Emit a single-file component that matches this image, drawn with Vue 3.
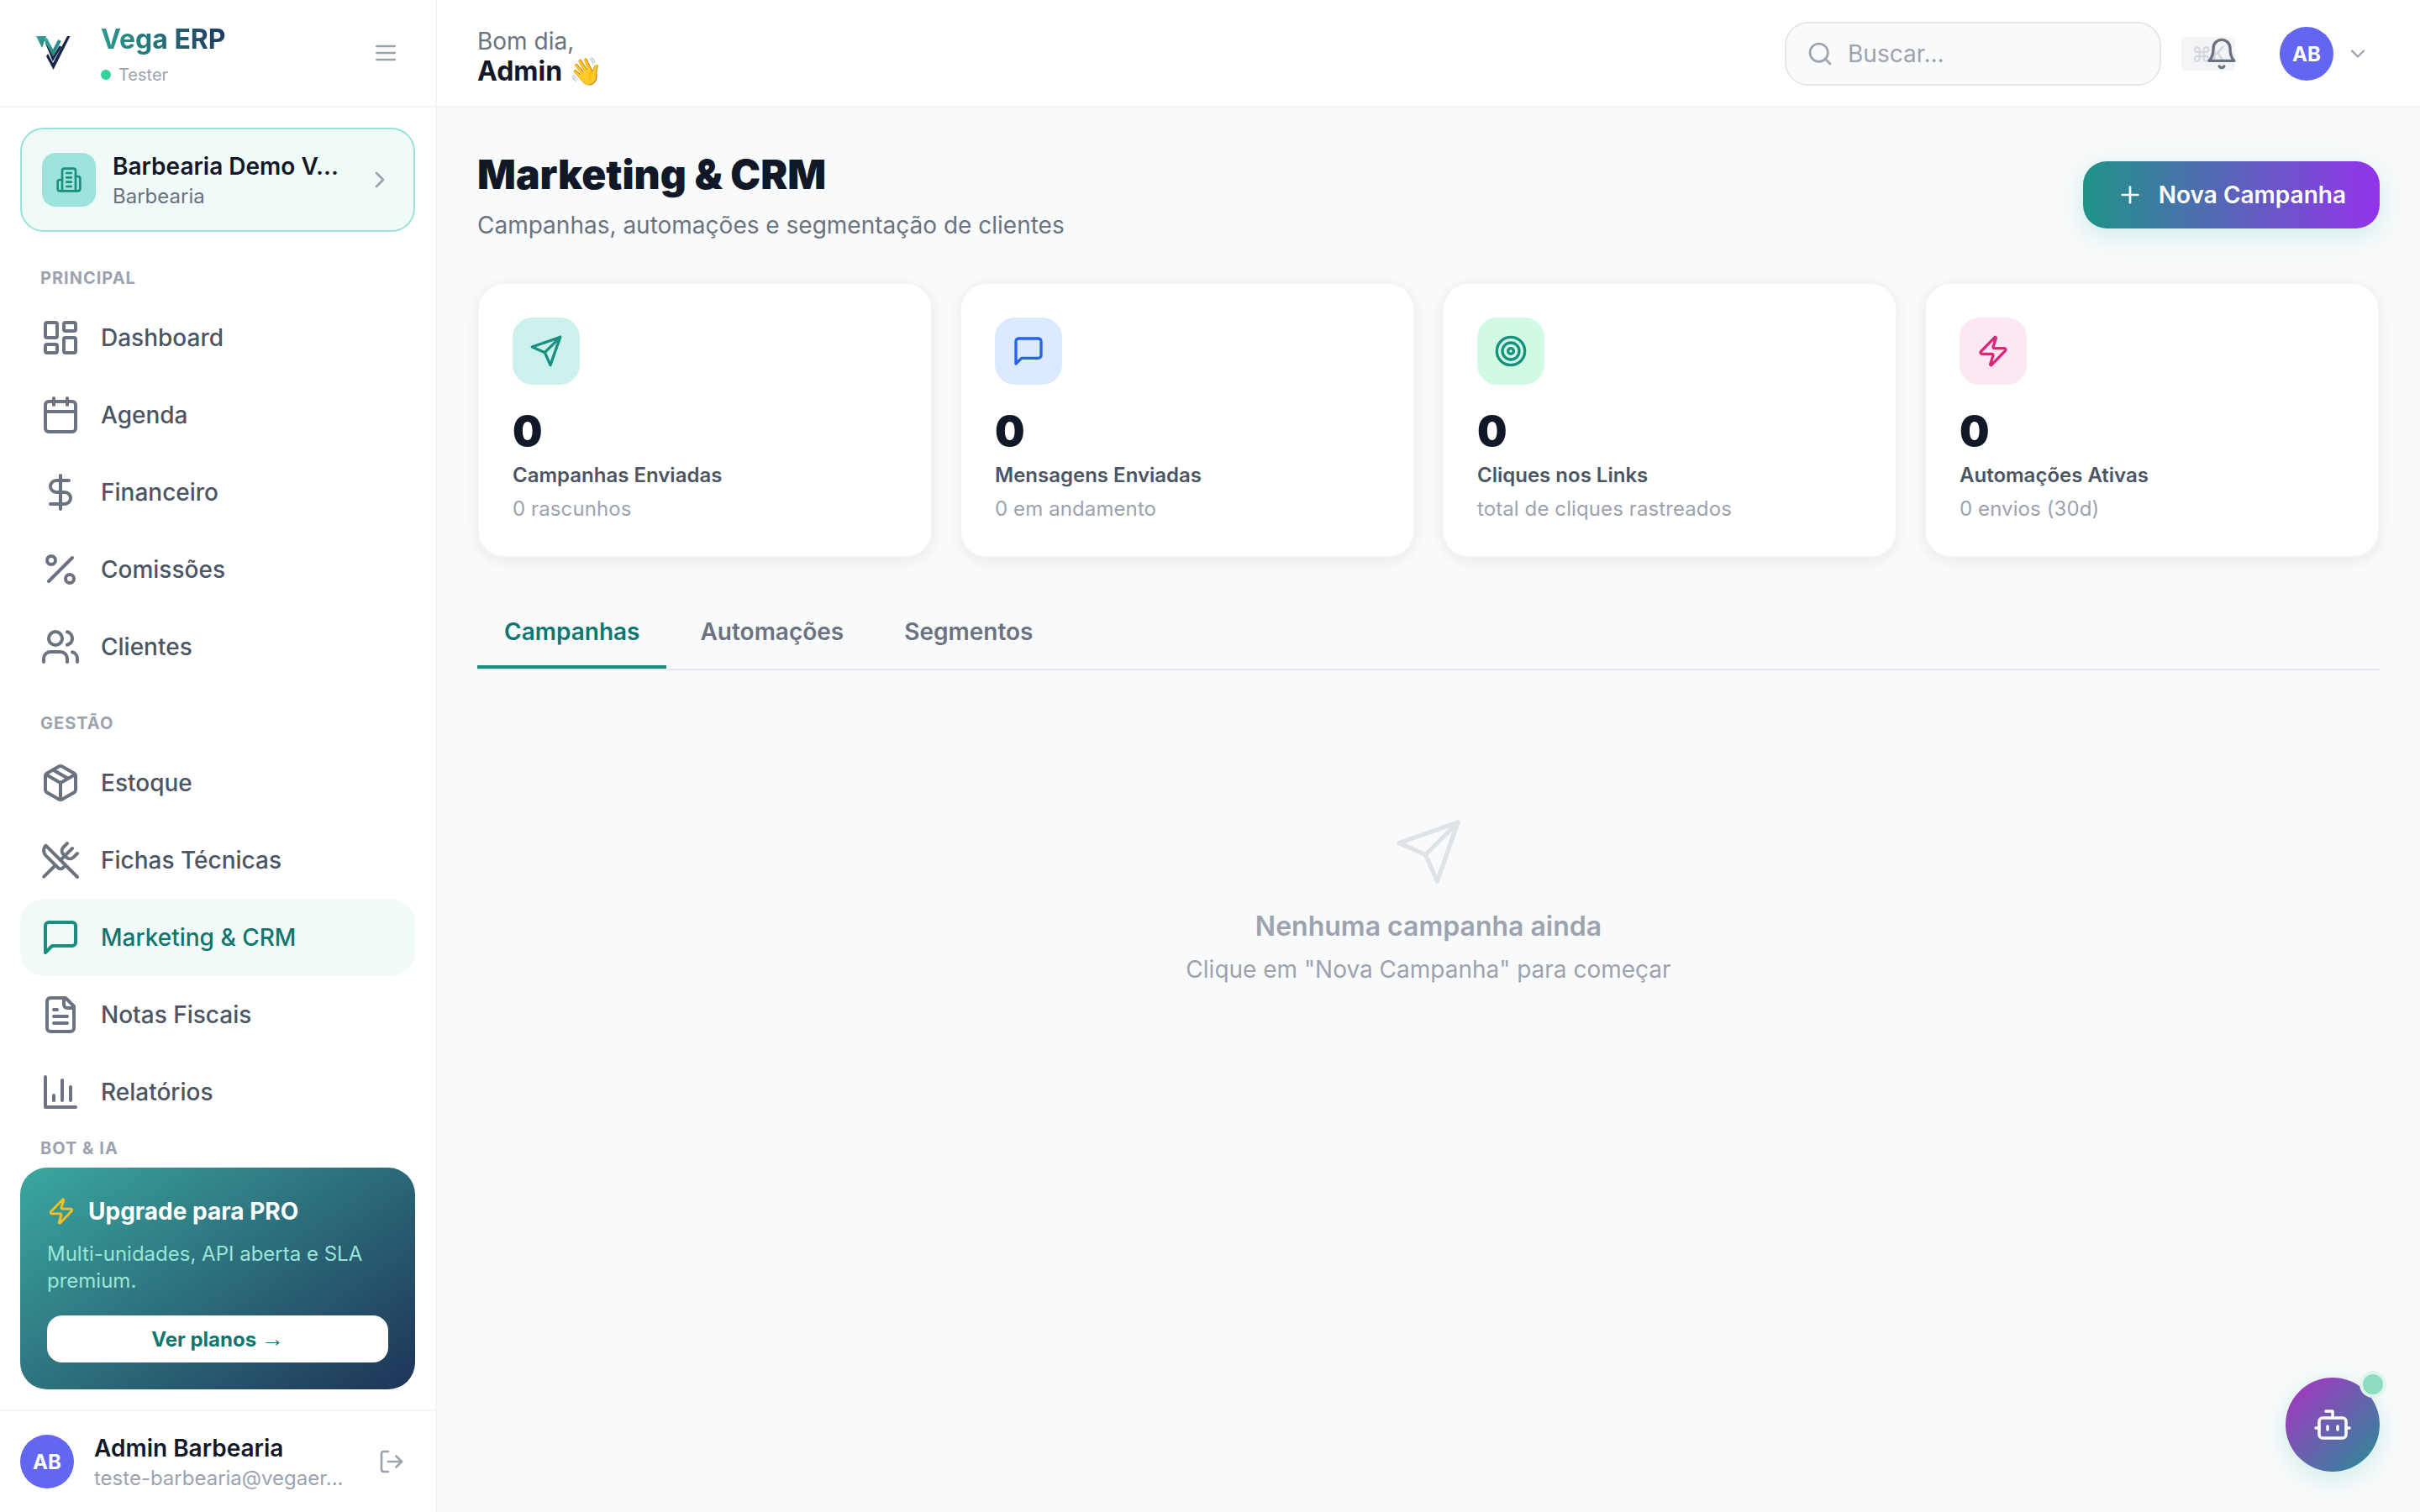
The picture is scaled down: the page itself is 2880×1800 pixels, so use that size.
<script setup>
import { ref } from 'vue'

const principal = [
  { label: 'Dashboard', icon: 'dashboard' },
  { label: 'Agenda', icon: 'calendar' },
  { label: 'Financeiro', icon: 'dollar' },
  { label: 'Comissões', icon: 'percent' },
  { label: 'Clientes', icon: 'users' },
]
const gestao = [
  { label: 'Estoque', icon: 'package' },
  { label: 'Fichas Técnicas', icon: 'utensils' },
  { label: 'Marketing & CRM', icon: 'message', active: true },
  { label: 'Notas Fiscais', icon: 'file' },
  { label: 'Relatórios', icon: 'chart' },
]
const stats = [
  { icon: 'send', tone: 'teal', label: 'Campanhas Enviadas', sub: '0 rascunhos' },
  { icon: 'message', tone: 'blue', label: 'Mensagens Enviadas', sub: '0 em andamento' },
  { icon: 'target', tone: 'green', label: 'Cliques nos Links', sub: 'total de cliques rastreados' },
  { icon: 'zap', tone: 'pink', label: 'Automações Ativas', sub: '0 envios (30d)' },
]
const tabs = ['Campanhas', 'Automações', 'Segmentos']
const activeTab = ref('Campanhas')

// lucide shapes, written as svg child markup
const icons = {
  dashboard: '<rect width="7" height="9" x="3" y="3" rx="1"/><rect width="7" height="5" x="14" y="3" rx="1"/><rect width="7" height="9" x="14" y="12" rx="1"/><rect width="7" height="5" x="3" y="16" rx="1"/>',
  calendar: '<path d="M8 2v4"/><path d="M16 2v4"/><rect width="18" height="18" x="3" y="4" rx="2"/><path d="M3 10h18"/>',
  dollar: '<line x1="12" x2="12" y1="2" y2="22"/><path d="M17 5H9.5a3.5 3.5 0 0 0 0 7h5a3.5 3.5 0 0 1 0 7H6"/>',
  percent: '<line x1="19" x2="5" y1="5" y2="19"/><circle cx="6.5" cy="6.5" r="2.5"/><circle cx="17.5" cy="17.5" r="2.5"/>',
  users: '<path d="M16 21v-2a4 4 0 0 0-4-4H6a4 4 0 0 0-4 4v2"/><circle cx="9" cy="7" r="4"/><path d="M22 21v-2a4 4 0 0 0-3-3.87"/><path d="M16 3.13a4 4 0 0 1 0 7.75"/>',
  package: '<path d="m7.5 4.27 9 5.15"/><path d="M21 8a2 2 0 0 0-1-1.73l-7-4a2 2 0 0 0-2 0l-7 4A2 2 0 0 0 3 8v8a2 2 0 0 0 1 1.73l7 4a2 2 0 0 0 2 0l7-4A2 2 0 0 0 21 16Z"/><path d="m3.3 7 8.7 5 8.7-5"/><path d="M12 22V12"/>',
  utensils: '<path d="m16 2-2.3 2.3a3 3 0 0 0 0 4.2l1.8 1.8a3 3 0 0 0 4.2 0L22 8"/><path d="M15 15 3.3 3.3a4.2 4.2 0 0 0 0 6l7.3 7.3c.7.7 2 .7 2.8 0L15 15Zm0 0 7 7"/><path d="m2.1 21.8 6.4-6.3"/><path d="m19 5-7 7"/>',
  message: '<path d="M21 15a2 2 0 0 1-2 2H7l-4 4V5a2 2 0 0 1 2-2h14a2 2 0 0 1 2 2z"/>',
  file: '<path d="M15 2H6a2 2 0 0 0-2 2v16a2 2 0 0 0 2 2h12a2 2 0 0 0 2-2V7Z"/><path d="M14 2v4a2 2 0 0 0 2 2h4"/><path d="M10 9H8"/><path d="M16 13H8"/><path d="M16 17H8"/>',
  chart: '<path d="M3 3v18h18"/><path d="M18 17V9"/><path d="M13 17V5"/><path d="M8 17v-3"/>',
  send: '<path d="m22 2-7 20-4-9-9-4Z"/><path d="M22 2 11 13"/>',
  target: '<circle cx="12" cy="12" r="10"/><circle cx="12" cy="12" r="6"/><circle cx="12" cy="12" r="2"/>',
  zap: '<path d="M4 14a1 1 0 0 1-.78-1.63l9.9-10.2a.5.5 0 0 1 .86.46l-1.92 6.02A1 1 0 0 0 13 10h7a1 1 0 0 1 .78 1.63l-9.9 10.2a.5.5 0 0 1-.86-.46l1.92-6.02A1 1 0 0 0 11 14z"/>',
  building: '<path d="M6 22V4a2 2 0 0 1 2-2h8a2 2 0 0 1 2 2v18Z"/><path d="M6 12H4a2 2 0 0 0-2 2v6a2 2 0 0 0 2 2h2"/><path d="M18 9h2a2 2 0 0 1 2 2v9a2 2 0 0 1-2 2h-2"/><path d="M10 6h4"/><path d="M10 10h4"/><path d="M10 14h4"/><path d="M10 18h4"/>',
  menu: '<line x1="4" x2="20" y1="12" y2="12"/><line x1="4" x2="20" y1="6" y2="6"/><line x1="4" x2="20" y1="18" y2="18"/>',
  right: '<path d="m9 18 6-6-6-6"/>',
  down: '<path d="m6 9 6 6 6-6"/>',
  plus: '<path d="M5 12h14"/><path d="M12 5v14"/>',
  search: '<circle cx="11" cy="11" r="8"/><path d="m21 21-4.3-4.3"/>',
  bell: '<path d="M6 8a6 6 0 0 1 12 0c0 7 3 9 3 9H3s3-2 3-9"/><path d="M10.3 21a1.94 1.94 0 0 0 3.4 0"/>',
  logout: '<path d="M9 21H5a2 2 0 0 1-2-2V5a2 2 0 0 1 2-2h4"/><polyline points="16 17 21 12 16 7"/><line x1="21" x2="9" y1="12" y2="12"/>',
  bot: '<path d="M12 8V4H8"/><rect width="16" height="12" x="4" y="8" rx="2"/><path d="M2 14h2"/><path d="M20 14h2"/><path d="M15 13v2"/><path d="M9 13v2"/>',
}
</script>

<template>
  <div class="app">
    <aside class="sidebar">
      <div class="brand">
        <svg class="logo" viewBox="0 0 42 42">
          <defs>
            <linearGradient id="logoTeal" x1="0" y1="0" x2="1" y2="1">
              <stop offset="0" stop-color="#3aa89f" />
              <stop offset="1" stop-color="#1f7f7a" />
            </linearGradient>
          </defs>
          <path d="M40.500 1H37L20 33l-6-11-2 3 8.500 16z" fill="#16264a" />
          <path d="M12 8l8 20 9-15" fill="none" stroke="#16264a" stroke-width="3" />
          <path d="M0 1h12L7 15z" fill="url(#logoTeal)" />
          <path d="M11 4l9 17 8-15" fill="none" stroke="url(#logoTeal)" stroke-width="4" />
        </svg>
        <div class="brandText">
          <div class="brandName">Vega ERP</div>
          <div class="brandPlan"><span class="dot"></span>Tester</div>
        </div>
        <svg class="ico menuIco" viewBox="0 0 24 24" v-html="icons.menu"></svg>
      </div>

      <div class="unit">
        <div class="unitIcon">
          <svg class="ico buildIco" viewBox="0 0 24 24" v-html="icons.building"></svg>
        </div>
        <div class="unitText">
          <div class="unitName">Barbearia Demo V...</div>
          <div class="unitType">Barbearia</div>
        </div>
        <svg class="ico unitChevron" viewBox="0 0 24 24" v-html="icons.right"></svg>
      </div>

      <nav class="nav">
        <div class="navLabel">PRINCIPAL</div>
        <div class="navList">
          <a v-for="item in principal" :key="item.label" class="navItem">
            <svg class="ico navIco" viewBox="0 0 24 24" v-html="icons[item.icon]"></svg>
            {{ item.label }}
          </a>
        </div>
        <div class="navLabel">GESTÃO</div>
        <div class="navList">
          <a
            v-for="item in gestao"
            :key="item.label"
            class="navItem"
            :class="{ active: item.active }"
          >
            <svg class="ico navIco" viewBox="0 0 24 24" v-html="icons[item.icon]"></svg>
            {{ item.label }}
          </a>
        </div>
        <div class="navLabel tight">BOT &amp; IA</div>
      </nav>

      <div class="promo">
        <div class="promoTitle">
          <svg class="ico promoZap" viewBox="0 0 24 24" v-html="icons.zap"></svg>
          Upgrade para PRO
        </div>
        <p class="promoText">Multi-unidades, API aberta e SLA premium.</p>
        <button type="button" class="promoBtn">Ver planos <span class="arrow">→</span></button>
      </div>

      <div class="userBar">
        <div class="avatar">AB</div>
        <div class="userText">
          <div class="userName">Admin Barbearia</div>
          <div class="userMail">teste-barbearia@vegaer...</div>
        </div>
        <svg class="ico logoutIco" viewBox="0 0 24 24" v-html="icons.logout"></svg>
      </div>
    </aside>

    <div class="main">
      <header class="topbar">
        <div class="greet">
          <div class="greetHello">Bom dia,</div>
          <div class="greetName">Admin <span class="wave">👋</span></div>
        </div>
        <div class="search">
          <svg class="ico searchIco" viewBox="0 0 24 24" v-html="icons.search"></svg>
          <span>Buscar...</span>
        </div>
        <div class="bellWrap">
          <span class="kbd">⌘K</span>
          <svg class="ico bellIco" viewBox="0 0 24 24" v-html="icons.bell"></svg>
        </div>
        <div class="avatar topAvatar">AB</div>
        <svg class="ico topChevron" viewBox="0 0 24 24" v-html="icons.down"></svg>
      </header>

      <main class="content">
        <div class="pageHead">
          <div>
            <h1 class="pageTitle">Marketing &amp; CRM</h1>
            <p class="pageSub">Campanhas, automações e segmentação de clientes</p>
          </div>
          <button type="button" class="newBtn">
            <svg class="ico plusIco" viewBox="0 0 24 24" v-html="icons.plus"></svg>
            Nova Campanha
          </button>
        </div>

        <div class="stats">
          <div v-for="s in stats" :key="s.label" class="statCard">
            <div class="statIcon" :class="s.tone">
              <svg class="ico statIco" viewBox="0 0 24 24" v-html="icons[s.icon]"></svg>
            </div>
            <div class="statValue">0</div>
            <div class="statLabel">{{ s.label }}</div>
            <div class="statSub">{{ s.sub }}</div>
          </div>
        </div>

        <div class="tabs">
          <button
            v-for="t in tabs"
            :key="t"
            type="button"
            class="tab"
            :class="{ on: activeTab === t }"
            @click="activeTab = t"
          >
            {{ t }}
          </button>
        </div>

        <div class="empty">
          <svg class="ico emptyIco" viewBox="0 0 24 24" v-html="icons.send"></svg>
          <div class="emptyTitle">Nenhuma campanha ainda</div>
          <div class="emptySub">Clique em "Nova Campanha" para começar</div>
        </div>
      </main>
    </div>

    <button type="button" class="fab">
      <svg class="ico fabIco" viewBox="0 0 24 24" v-html="icons.bot"></svg>
      <span class="fabDot"></span>
    </button>
  </div>
</template>

<style scoped>
.app {
  display: flex;
  height: 1800px;
  overflow: hidden;
  background: #f9fafb;
  font-family: Inter, "Liberation Sans", sans-serif;
  color: #111827;
}
.ico {
  fill: none;
  stroke: currentColor;
  stroke-width: 2;
  stroke-linecap: round;
  stroke-linejoin: round;
  flex-shrink: 0;
  display: block;
}

/* sidebar */
.sidebar {
  width: 520px;
  flex-shrink: 0;
  display: flex;
  flex-direction: column;
  background: #fff;
  border-right: 2px solid #f3f4f6;
  box-sizing: border-box;
}
.brand {
  height: 128px;
  box-sizing: border-box;
  border-bottom: 2px solid #f3f4f6;
  display: flex;
  align-items: center;
  padding: 0 43px 0 43px;
  flex-shrink: 0;
}
.logo {
  width: 42px;
  height: 42px;
  flex-shrink: 0;
  margin-right: 35px;
}
.brandText {
  flex: 1;
  padding-top: 3px;
}
.brandName {
  font-size: 32px;
  line-height: 40px;
  font-weight: 700;
  background: linear-gradient(90deg, #2a9d8f, #1e3a5f);
  -webkit-background-clip: text;
  background-clip: text;
  color: transparent;
  width: max-content;
}
.brandPlan {
  display: flex;
  align-items: center;
  gap: 9px;
  margin-top: 9px;
  font-size: 20px;
  line-height: 26px;
  color: #9ca3af;
}
.dot {
  width: 12px;
  height: 12px;
  border-radius: 50%;
  background: #34d399;
}
.menuIco {
  width: 32px;
  height: 32px;
  color: #9ca3af;
}
.unit {
  margin: 24px 24px 0;
  height: 124px;
  box-sizing: border-box;
  flex-shrink: 0;
  display: flex;
  align-items: center;
  padding: 0 24px;
  background: #f0faf8;
  border: 2px solid #99e2da;
  border-radius: 28px;
}
.unitIcon {
  width: 64px;
  height: 64px;
  border-radius: 16px;
  background: #9de3dc;
  display: flex;
  align-items: center;
  justify-content: center;
  margin-right: 20px;
}
.buildIco {
  width: 32px;
  height: 32px;
  color: #1a8f80;
}
.unitText {
  flex: 1;
  min-width: 0;
  padding-top: 2px;
}
.unitName {
  font-size: 28px;
  line-height: 36px;
  font-weight: 600;
}
.unitType {
  margin-top: 2px;
  font-size: 24px;
  line-height: 32px;
  color: #6b7280;
}
.unitChevron {
  width: 32px;
  height: 32px;
  color: #9ca3af;
}
.nav {
  flex: 1;
  min-height: 0;
  overflow: hidden;
  padding: 41px 24px 0;
}
.navLabel {
  padding-left: 24px;
  font-size: 20px;
  line-height: 28px;
  font-weight: 700;
  letter-spacing: 1px;
  color: #9ca3af;
  margin-bottom: 12px;
}
.navLabel.tight {
  margin-top: -24px;
  margin-bottom: 0;
}
.navList {
  display: flex;
  flex-direction: column;
  gap: 2px;
  margin-bottom: 32px;
}
.navItem {
  height: 90px;
  display: flex;
  align-items: center;
  gap: 24px;
  padding-left: 24px;
  border-radius: 28px;
  font-size: 28px;
  font-weight: 500;
  color: #4b5563;
}
.navIco {
  width: 48px;
  height: 48px;
  color: #6b7280;
}
.navItem.active {
  background: #f0faf8;
  color: #0f766e;
}
.navItem.active .navIco {
  color: #1a8f80;
}
.promo {
  margin: 0 24px 24px;
  height: 264px;
  box-sizing: border-box;
  flex-shrink: 0;
  padding: 30px 32px 0;
  border-radius: 32px;
  background: linear-gradient(145deg, #3aa89f, #1e3358);
  color: #fff;
}
.promoTitle {
  display: flex;
  align-items: center;
  gap: 15px;
  font-size: 28px;
  line-height: 44px;
  font-weight: 700;
}
.promoZap {
  width: 34px;
  height: 34px;
  color: #fbbf24;
}
.promoText {
  margin: 13px 0 25px;
  font-size: 24px;
  line-height: 32px;
  color: #99e6d8;
}
.promoBtn {
  width: 100%;
  height: 56px;
  border: none;
  border-radius: 18px;
  background: #fff;
  color: #0f766e;
  font-family: inherit;
  font-size: 24px;
  font-weight: 700;
}
.arrow {
  font-family: "Liberation Sans", sans-serif;
  font-size: 27px;
  font-weight: 400;
}
.userBar {
  height: 122px;
  box-sizing: border-box;
  flex-shrink: 0;
  border-top: 2px solid #f3f4f6;
  display: flex;
  align-items: center;
  padding: 0 36px 0 24px;
}
.avatar {
  width: 64px;
  height: 64px;
  border-radius: 50%;
  background: #6366f1;
  color: #fff;
  font-size: 24px;
  font-weight: 700;
  display: flex;
  align-items: center;
  justify-content: center;
  flex-shrink: 0;
}
.userText {
  flex: 1;
  min-width: 0;
  margin-left: 24px;
  padding-top: 2px;
}
.userName {
  font-size: 28px;
  line-height: 36px;
  font-weight: 600;
}
.userMail {
  margin-top: 2px;
  font-size: 24px;
  line-height: 32px;
  color: #9ca3af;
}
.logoutIco {
  width: 32px;
  height: 32px;
  color: #9ca3af;
}

/* top bar */
.main {
  flex: 1;
  min-width: 0;
  display: flex;
  flex-direction: column;
}
.topbar {
  height: 128px;
  box-sizing: border-box;
  flex-shrink: 0;
  background: #fff;
  border-bottom: 2px solid #f3f4f6;
  display: flex;
  align-items: center;
  padding: 2px 48px 0;
}
.greet {
  flex: 1;
  padding-top: 6px;
}
.greetHello {
  font-size: 28px;
  line-height: 36px;
  color: #6b7280;
}
.greetName {
  font-size: 32px;
  line-height: 36px;
  font-weight: 700;
}
.wave {
  font-weight: 400;
}
.search {
  width: 448px;
  height: 76px;
  box-sizing: border-box;
  display: flex;
  align-items: center;
  gap: 17px;
  padding-left: 24px;
  background: #f9fafb;
  border: 2px solid #e5e7eb;
  border-radius: 28px;
  font-size: 28px;
  color: #9ca3af;
}
.searchIco {
  width: 32px;
  height: 32px;
}
.bellWrap {
  position: relative;
  width: 64px;
  height: 40px;
  margin-left: 24px;
}
.kbd {
  display: flex;
  width: 64px;
  height: 40px;
  align-items: center;
  justify-content: center;
  border-radius: 8px;
  background: #f3f4f6;
  font-size: 24px;
  color: #d1d5db;
}
.bellIco {
  position: absolute;
  right: -4px;
  top: 0;
  width: 40px;
  height: 40px;
  color: #6b7280;
}
.topAvatar {
  margin-left: 53px;
}
.topChevron {
  width: 28px;
  height: 28px;
  margin-left: 15px;
  margin-right: 12px;
  color: #9ca3af;
}

/* page */
.content {
  flex: 1;
  min-height: 0;
  padding: 48px 48px 0;
  display: flex;
  flex-direction: column;
}
.pageHead {
  display: flex;
  align-items: flex-start;
  justify-content: space-between;
}
.pageTitle {
  margin: 0;
  font-size: 48px;
  line-height: 64px;
  font-weight: 900;
}
.pageSub {
  margin: 8px 0 0;
  font-size: 28px;
  line-height: 40px;
  color: #6b7280;
}
.newBtn {
  display: flex;
  align-items: center;
  gap: 18px;
  height: 80px;
  padding: 0 40px;
  margin-top: 16px;
  border: none;
  border-radius: 28px;
  background: linear-gradient(90deg, #1f9488, #9333ea);
  box-shadow: 0 8px 32px rgba(20, 184, 166, 0.2);
  color: #fff;
  font-family: inherit;
  font-size: 28px;
  font-weight: 600;
}
.plusIco {
  width: 32px;
  height: 32px;
}
.stats {
  display: grid;
  grid-template-columns: repeat(4, 1fr);
  gap: 32px;
  margin-top: 48px;
}
.statCard {
  height: 328px;
  box-sizing: border-box;
  padding: 40px;
  background: #fff;
  border: 2px solid #f3f4f6;
  border-radius: 32px;
  box-shadow: 0 4px 16px rgba(0, 0, 0, 0.07);
}
.statIcon {
  width: 80px;
  height: 80px;
  border-radius: 24px;
  display: flex;
  align-items: center;
  justify-content: center;
}
.statIcon.teal { background: #ccf0ec; color: #1a8f80; }
.statIcon.blue { background: #dbeafe; color: #2563eb; }
.statIcon.green { background: #d1fae5; color: #14917f; }
.statIcon.pink { background: #fce7f3; color: #db2777; }
.statIco {
  width: 40px;
  height: 40px;
}
.statValue {
  margin-top: 25px;
  font-size: 50px;
  line-height: 60px;
  font-weight: 900;
}
.statLabel {
  margin-top: 5px;
  font-size: 24px;
  line-height: 36px;
  font-weight: 600;
  color: #4b5563;
}
.statSub {
  margin-top: 4px;
  font-size: 24px;
  line-height: 36px;
  letter-spacing: 0.1px;
  color: #9ca3af;
}
.tabs {
  display: flex;
  gap: 8px;
  margin-top: 48px;
  border-bottom: 2px solid #e5e7eb;
}
.tab {
  height: 84px;
  padding: 0 32px;
  border: none;
  border-bottom: 4px solid transparent;
  background: none;
  font-family: inherit;
  font-size: 28px;
  font-weight: 600;
  color: #6b7280;
}
.tab.on {
  color: #0f766e;
  border-bottom-color: #1a8f80;
}
.empty {
  display: flex;
  flex-direction: column;
  align-items: center;
  margin-top: 174px;
}
.emptyIco {
  width: 84px;
  height: 84px;
  stroke-width: 1.5;
  color: #dfe2e7;
}
.emptyTitle {
  margin-top: 27px;
  font-size: 32px;
  line-height: 40px;
  font-weight: 600;
  color: #9ca3af;
}
.emptySub {
  margin-top: 13px;
  font-size: 28px;
  line-height: 36px;
  color: #9ca3af;
}

.fab {
  position: fixed;
  right: 48px;
  bottom: 48px;
  width: 112px;
  height: 112px;
  border: none;
  border-radius: 50%;
  background: linear-gradient(135deg, #ad30c4, #268f96);
  box-shadow: 0 8px 32px rgba(20, 184, 166, 0.2);
  display: flex;
  align-items: center;
  justify-content: center;
  color: #fff;
  padding: 0;
}
.fabIco {
  width: 48px;
  height: 48px;
  stroke-width: 1.75;
}
.fabDot {
  position: absolute;
  top: -8px;
  right: -8px;
  width: 24px;
  height: 24px;
  border-radius: 50%;
  background: #8edcc0;
  border: 4px solid rgba(255, 255, 255, 0.7);
}
</style>
